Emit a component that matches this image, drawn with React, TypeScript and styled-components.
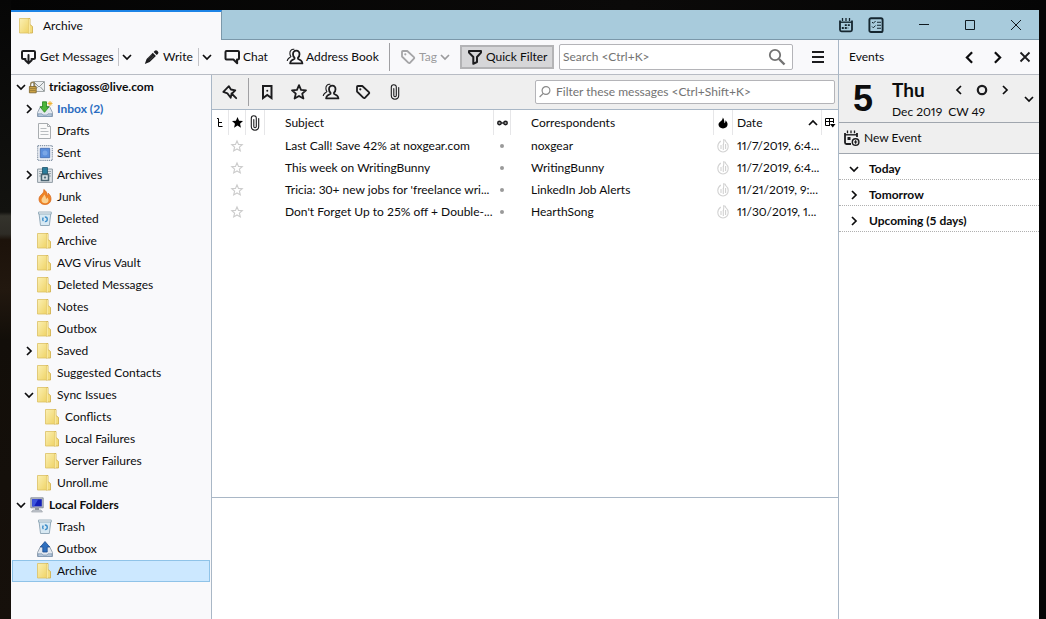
import React from "react";
import styled, { createGlobalStyle, css } from "styled-components";

const Global = createGlobalStyle`
  * { box-sizing: border-box; }
  body { margin: 0; background: #070605; }
  body, button, input, table {
    font-family: Lato, "Open Sans", sans-serif;
    font-size: 12px;
    line-height: 16px;
    color: #0c0c0d;
  }
`;

const line = "#a9b7c6";
const chrome = "#f9f9fb";
const grey = "#efefef";

/* ---------- icons ---------- */

const Svg = styled.svg`
  display: block;
  flex: none;
  overflow: visible;
`;

type IconProps = { size?: number; children: React.ReactNode; color?: string };
const Line = ({ size = 16, color = "#1c1c1e", children }: IconProps) => (
  <Svg width={size} height={size} viewBox="0 0 16 16" fill="none" stroke={color} strokeWidth="2" strokeLinejoin="round" strokeLinecap="round" aria-hidden="true">
    {children}
  </Svg>
);

const Chevron = ({ dir, size = 10 }: { dir: "down" | "right" | "left" | "up"; size?: number }) => {
  const d = {
    down: "M1 3l4 4 4-4",
    up: "M1 7l4-4 4 4",
    right: "M3 1l4 4-4 4",
    left: "M7 1L3 5l4 4",
  }[dir];
  return (
    <Svg width={size} height={size} viewBox="0 0 10 10" fill="none" stroke="currentColor" strokeWidth="1.700" aria-hidden="true">
      <path d={d} />
    </Svg>
  );
};

const GetIcon = () => (
  <Line>
    <path d="M4.500 10H2.200C1.400 10 1 9.600 1 9V3c0-.7.400-1 1.200-1h10.600c.8 0 1.200.3 1.200 1v6c0 .6-.4 1-1.200 1H10.500" />
    <path d="M7.500 6v8M4.300 11.200l3.200 3.200 3.200-3.200" />
  </Line>
);
const PencilIcon = () => (
  <Svg width={16} height={16} viewBox="0 0 16 16" fill="#1c1c1e" aria-hidden="true">
    <path d="M10.800 1.800a1.700 1.700 0 0 1 2.400 0l.7.7a1.700 1.700 0 0 1 0 2.400l-1.200 1.200-3.100-3.100zM8.800 3.800l3.100 3.100-6.200 6.200L.8 15l1.800-5z" />
    <path d="M8 5.500L3.800 9.700M9.500 7l-4.200 4.300" stroke="#777" strokeWidth=".5" />
  </Svg>
);
const ChatIcon = () => (
  <Line>
    <path d="M2.500 2h11.500c.7 0 1 .4 1 1v6.500c0 .7-.4 1-1 1H13l.2 3.800-3.800-3.800H2.500c-.7 0-1-.4-1-1V3c0-.6.300-1 1-1z" />
  </Line>
);
const PersonIcon = () => (
  <Svg width={16} height={16} viewBox="0 0 16 16" fill="none" stroke="#1c1c1e" strokeWidth="1.800" strokeLinejoin="round" aria-hidden="true">
    <path d="M9.300 1.700C7 1.700 6 3.300 6 5.200c0 1.500.6 2.700 1.500 3.500v1L4.600 11.500c-.9.600-1.300 1.400-1.500 2.900h12.300c-.2-1.500-.6-2.300-1.500-2.900L11 9.700v-1c.9-.8 1.500-2 1.500-3.500 0-1.900-.9-3.500-3.200-3.500z" />
    <path d="M7.300.4C4.300-.1 2.700 1.900 2.900 4.600c.1 1.300.4 2.200 1 3L1.500 9.500C.8 10.100.4 10.800.2 12" strokeWidth="1.100" />
  </Svg>
);
const TagIcon = ({ color }: { color?: string }) => (
  <Line color={color}>
    <path d="M2.800 2h4.500l6.600 6.200c.5.500.5 1 0 1.400l-4 4.200c-.5.500-1 .5-1.400 0L2 7.500V2.800c0-.5.300-.8.800-.8z" strokeWidth="1.800" />
    <circle cx="5.300" cy="5.300" r=".5" strokeWidth="1.200" />
  </Line>
);
const FunnelIcon = () => (
  <Line>
    <path d="M2 2h12v1.600L10 8v5L6.300 14.800V8L2 3.600z" />
  </Line>
);
const PinIcon = () => (
  <Line>
    <path d="M1.300 7.800L6.900 2.200l2 3.300 4.400.9-3.800 3.600-.8 3.800-3.300-4.400zM9.500 9.500l4.700 4.700" strokeWidth="1.800" />
  </Line>
);
const BookmarkIcon = () => (
  <Line>
    <path d="M4 2h8.500v12L8.250 11 4 14z" strokeLinejoin="miter" />
    <circle cx="8.250" cy="6.800" r="1" fill="#1c1c1e" stroke="none" />
  </Line>
);
const starPath = "M8 1.200l2 4.600 5 .5-3.800 3.300 1.200 4.900L8 11.900l-4.400 2.600 1.200-4.900L1 6.300l5-.5z";
const StarIcon = () => (
  <Line>
    <path d={starPath} strokeWidth="1.800" />
  </Line>
);
const ClipIcon = () => (
  <Svg width={16} height={16} viewBox="0 0 16 16" fill="none" stroke="#1c1c1e" strokeWidth="1.100" strokeLinecap="round" aria-hidden="true">
    <path d="M6.800 4.500v7c0 1.700 2.500 1.700 2.500 0V3.200c0-3.300-5-3.300-5 0v8.400c0 4.800 7.400 4.800 7.400 0V3.500" />
  </Svg>
);
const SearchIcon = () => (
  <Svg width={18} height={18} viewBox="0 0 18 18" fill="none" stroke="#737373" aria-hidden="true">
    <circle cx="7" cy="7" r="5.200" strokeWidth="1.800" />
    <path d="M11 11l5.500 5.500" strokeWidth="2.400" />
  </Svg>
);
const LensIcon = () => (
  <Svg width={12} height={12} viewBox="0 0 12 12" fill="none" stroke="#8a8a8a" strokeWidth="1.200" aria-hidden="true">
    <circle cx="7" cy="4.500" r="3.900" />
    <path d="M4.300 7.300L.6 11" />
  </Svg>
);
const MenuIcon = () => (
  <Svg width={12} height={12} viewBox="0 0 12 12" fill="#1c1c1e" aria-hidden="true">
    <path d="M0 0h12v2H0zM0 5h12v2H0zM0 10h12v2H0z" />
  </Svg>
);
const CalendarIcon = () => (
  <Svg width={16} height={16} viewBox="0 0 16 16" fill="none" stroke="#15262f" aria-hidden="true">
    <path d="M2 3.500v9.300c0 1 .5 1.500 1.500 1.500h9c1 0 1.500-.5 1.500-1.500V3.500" strokeWidth="1.800" />
    <path d="M2 5.200h12" strokeWidth="1.400" />
    <path d="M4.500 1v3M8 1v3M11.500 1v3" strokeWidth="1.300" />
    <path d="M6.800 8.200h5.400M3.800 11h6.400" strokeWidth="1.800" strokeDasharray="2 1" />
  </Svg>
);
const TasksIcon = () => (
  <Svg width={16} height={16} viewBox="0 0 16 16" fill="none" stroke="#15262f" aria-hidden="true">
    <rect x="1.400" y="1.200" width="13.200" height="13.800" rx="1.600" strokeWidth="1.900" />
    <path d="M9 5.200h4M9 8.200h4M9 11.200h4" strokeWidth="1.100" />
    <path d="M4 5l1.300 1.300L7.600 4M4 9.500l1.300 1.300 2.300-2.300" strokeWidth="1" />
  </Svg>
);
const NewEventIcon = () => (
  <Svg width={16} height={16} viewBox="0 0 16 16" fill="none" stroke="#1c1c1e" aria-hidden="true">
    <path d="M13 7V3M1 3v9.500c0 1 .5 1.500 1.500 1.500H7" strokeWidth="1.800" />
    <path d="M1 4.800h12" strokeWidth="1.400" />
    <path d="M3.500.5v2.700M7 .5v2.700M10.500.5v2.700" strokeWidth="1.300" />
    <path d="M3.500 8.500h3" strokeWidth="3" />
    <circle cx="11.600" cy="12" r="3.300" strokeWidth="1.400" />
    <path d="M9.900 12h3.400M11.600 10.300v3.400" strokeWidth="1.200" />
  </Svg>
);
const FlameIcon = ({ faint }: { faint?: boolean }) => (
  <Svg width={faint ? 12 : 10} height={faint ? 14 : 12} viewBox="0 0 12 14" aria-hidden="true">
    {faint ? (
      <g fill="none" stroke="#d2d2d2" strokeWidth="1.100">
        <path d="M3.800 2C1.600 3.700.8 5.500.8 7.600.8 10.600 3 13 6 13s5.200-2.400 5.200-5.400c0-2-.6-3.600-2.400-5C8.700 1.500 7.600.8 6.600.8c.6 2.300-.2 3-.2 5.200" />
        <path d="M6.300 5v6M8.600 5v5M4 6v4" />
      </g>
    ) : (
      <path d="M6 13.500c3.200 0 5.500-2 5.500-4.900 0-1.900-.9-3.400-2.600-4.900.2 1.600-.2 2.900-1.200 3.500C7.600 4.300 7.300 2 5.800.3 5.700 2.500 4.600 3.800 2.900 5.200 1.400 6.400.6 7.300.6 8.900c0 2.700 2.200 4.600 5.400 4.600z" fill="#000" />
    )}
  </Svg>
);
const ThreadIcon = () => (
  <Svg width={6} height={9} viewBox="0 0 6 9" fill="none" stroke="#000" aria-hidden="true">
    <path d="M0 .5h1.500V8.500H5.500M1.500 4.500h3.500" />
  </Svg>
);
const GlassesIcon = () => (
  <Svg width={11} height={6} viewBox="0 0 12 6" fill="#999" stroke="#1c1c1e" strokeWidth="1.500" aria-hidden="true">
    <circle cx="2.700" cy="3" r="1.900" />
    <circle cx="9.300" cy="3" r="1.900" />
    <path d="M4.500 3h3" />
  </Svg>
);
const PickerIcon = () => (
  <Svg width={11} height={10} viewBox="0 0 11 10" fill="none" stroke="#000" aria-hidden="true">
    <path d="M8.500 5V.5h-8v7H5M.5 3.500h8M4.500.5v7" />
    <path d="M5 6h5.500L7.750 9.500z" fill="#000" stroke="none" />
  </Svg>
);

const FolderIcon = () => (
  <Svg width={16} height={16} viewBox="0 0 16 16" aria-hidden="true">
    <defs>
      <linearGradient id="folder" x1="0" y1="0" x2="1" y2="1">
        <stop offset="0" stopColor="#fbf0b4" />
        <stop offset="1" stopColor="#efd365" />
      </linearGradient>
    </defs>
    <path d="M9 .5h2v6l2.500 2v6.500H9z" fill="#f3dc7c" stroke="#cfac45" strokeWidth=".8" />
    <path d="M.5.5h9.300V15H.5z" fill="url(#folder)" stroke="#dcc063" strokeWidth=".8" />
    <path d="M10.300 1v14" stroke="#fff3b8" strokeWidth=".8" />
  </Svg>
);
const AccountIcon = () => (
  <Svg width={16} height={16} viewBox="0 0 16 16" aria-hidden="true">
    <path d="M4.500 2.500h11v10h-11z" fill="#eceff0" stroke="#a3a9aa" />
    <path d="M5 3l5 5 5-5M5 12l3.500-4M15 12l-3.500-4" fill="none" stroke="#8d9496" />
    <path d="M1.600 8V5.500c0-3 4-3 4 0V8" fill="none" stroke="#95855a" strokeWidth="1.300" />
    <path d="M.4 7.500h6.800v6.300H.4z" fill="#cba245" stroke="#7a6229" strokeWidth=".8" />
    <path d="M1 9.500h5.600M1 11.500h5.600" stroke="#8f7434" strokeWidth=".7" />
  </Svg>
);
const Tray = () => (
  <g>
    <path d="M3.500 5.500h9l3 6v4H.5v-4z" fill="#e3e8ef" stroke="#8f9dab" strokeWidth=".9" />
    <path d="M1 12.800h4l1 1.200h4l1-1.200h4v2.700H1z" fill="#b5c6d8" stroke="#6e8cab" strokeWidth=".6" />
  </g>
);
const InboxIcon = () => (
  <Svg width={16} height={16} viewBox="0 0 16 16" aria-hidden="true">
    <Tray />
    <path d="M5.500.8h4v5H12L7.500 11.300 3 5.800h2.500z" fill="#4cb53a" stroke="#23851b" strokeWidth=".8" />
    <path d="M13 0v5M10.500 2.500h5M11.300.8l3.500 3.500M14.800.8l-3.500 3.500" stroke="#eeb02b" strokeWidth=".9" />
  </Svg>
);
const OutboxIcon = () => (
  <Svg width={16} height={16} viewBox="0 0 16 16" aria-hidden="true">
    <Tray />
    <path d="M5.800 11V6H3.300L8 .5 12.700 6h-2.500v5z" fill="#2f6fbe" stroke="#1c4c90" strokeWidth=".8" />
  </Svg>
);
const DraftIcon = () => (
  <Svg width={16} height={16} viewBox="0 0 16 16" aria-hidden="true">
    <path d="M1.500.5h9l3 3v12h-12z" fill="#fafafa" stroke="#a9adb0" />
    <path d="M10.500.5v3h3" fill="none" stroke="#a9adb0" />
    <path d="M3.500 5.500h6M3.500 8.500h8M3.500 11.500h8" stroke="#b9bdc0" />
  </Svg>
);
const SentIcon = () => (
  <Svg width={16} height={16} viewBox="0 0 16 16" aria-hidden="true">
    <path d="M.7.7h14.600v14.600H.7z" fill="#f4f6f9" stroke="#8796a8" strokeWidth="1.200" strokeDasharray="1.300 .8" />
    <path d="M3.300 3.300h9.400v9.400H3.300z" fill="#5c8fdc" stroke="#4a74b8" />
    <circle cx="8" cy="8" r="2.500" fill="#7ba7e6" />
  </Svg>
);
const ArchivesIcon = () => (
  <Svg width={16} height={16} viewBox="0 0 16 16" aria-hidden="true">
    <path d="M.6 2h14.800v13.400H.6z" fill="#e0e5e9" stroke="#84919a" strokeWidth=".9" />
    <path d="M2 4.500h12M2 6.500h12M2 9h2M12 9h2" stroke="#98a5ad" />
    <path d="M5.500.5h5V7h-5z" fill="#2b7d9c" stroke="#1d536a" strokeWidth=".8" />
    <path d="M4.500 7.500h7v6h-7z" fill="#e6edf0" stroke="#4a6472" strokeWidth="1.600" />
    <path d="M6.800 9.500h2.400v2H6.800z" fill="#56727f" />
  </Svg>
);
const JunkIcon = () => (
  <Svg width={16} height={16} viewBox="0 0 16 16" aria-hidden="true">
    <path d="M8 15.500c3.700 0 6-2.400 6-5.600 0-2.300-1-4.200-2.800-5.700.1 1.400-.2 2.200-.9 2.700C10.300 4 9 1.800 6.800.5 7.200 3 5.900 4 4.200 5.800 2.800 7.200 2 8.400 2 10.200c0 3.200 2.500 5.300 6 5.300z" fill="#ef8427" stroke="#d4661a" strokeWidth=".7" />
    <path d="M8.300 14.300c2 0 3.200-1.300 3.200-3 0-1.200-.5-2-1.300-2.800-.3 1-.7 1.400-1.200 1.500C9 8 8.300 6.500 7 5.500c.2 2-2.500 3-2.500 5.800 0 1.900 1.600 3 3.800 3z" fill="#fbd190" />
  </Svg>
);
const TrashIcon = () => (
  <Svg width={16} height={16} viewBox="0 0 16 16" aria-hidden="true">
    <path d="M2 2.500h11.800L12.300 14.500h-8.800z" fill="#d8e9f3" stroke="#8aa3b3" strokeWidth=".9" />
    <path d="M1.500 1h12.800v2H1.500z" fill="#edf4f8" stroke="#8aa3b3" strokeWidth=".8" />
    <circle cx="8" cy="8.300" r="2.300" fill="none" stroke="#3f8fca" strokeWidth="1.400" strokeDasharray="3.400 1.400" />
  </Svg>
);
const ComputerIcon = () => (
  <Svg width={16} height={16} viewBox="0 0 16 16" aria-hidden="true">
    <path d="M1.800.8h12.400v10H1.800z" fill="#b9bfc9" stroke="#7b828e" strokeWidth=".8" />
    <path d="M3.200 2.200h9.600v7.200H3.200z" fill="#1420b8" />
    <path d="M3.200 2.200h6L5 9.400H3.200z" fill="#3c55dd" />
    <path d="M6 11h4v2H6z" fill="#8f959e" />
    <path d="M4 13h8l1.500 2h-11z" fill="#c9cdd3" stroke="#8f959e" strokeWidth=".6" />
  </Svg>
);

/* ---------- frame ---------- */

const Desktop = styled.div`
  display: flex;
  min-height: 100vh;
  padding: 10px 7px 0 11px;
  background:
    linear-gradient(180deg, #060606 0, #12120f 212px, #34332c 216px, #2e2c26 234px, #1c120a 240px, #22180f 290px, #120e09 340px, #16100b 100%) 0 0 / 11px 100% no-repeat,
    linear-gradient(90deg, #040404 0, #0b0a09 60%, #050505 100%);
`;
const Window = styled.div`
  flex: 1;
  min-width: 0;
  display: flex;
  flex-direction: column;
  background: #fff;
`;
const TitleBar = styled.header`
  display: flex;
  height: 30px;
  background: #a8cbdc;
`;
const Tab = styled.div`
  width: 211px;
  display: flex;
  align-items: center;
  gap: 8px;
  padding: 0 8px;
  border-top: 2px solid #1d84e6;
  border-right: 1px solid #7b98aa;
  background: ${chrome};
`;
const TitleRest = styled.div`
  flex: 1;
  display: flex;
  justify-content: flex-end;
  border-bottom: 1px solid #7b98aa;
`;
const Shortcuts = styled.div`
  display: flex;
  margin-right: 10px;
`;
const PlainButton = styled.button`
  display: flex;
  align-items: center;
  justify-content: center;
  padding: 0;
  border: 0;
  background: none;
`;
const TitleButton = styled(PlainButton)<{ $small?: boolean }>`
  width: ${(p) => (p.$small ? 30 : 46)}px;
`;
const Columns = styled.div`
  flex: 1;
  display: flex;
`;
const Main = styled.main`
  flex: 1;
  min-width: 0;
  display: flex;
  flex-direction: column;
`;
const Panes = styled.div`
  flex: 1;
  display: flex;
`;

/* ---------- toolbar ---------- */

const Toolbar = styled.div`
  display: flex;
  align-items: center;
  height: 35px;
  padding: 0 14px 0 10px;
  background: ${chrome};
  border-bottom: 1px solid #b8bcc4;
`;
const ToolButton = styled.button<{ $disabled?: boolean; $pressed?: boolean; $width?: number }>`
  display: flex;
  align-items: center;
  gap: 3px;
  height: 24px;
  width: ${(p) => (p.$width ? p.$width + "px" : "auto")};
  flex: none;
  padding: 0;
  border: 0;
  background: none;
  white-space: nowrap;
  ${(p) => p.$disabled && css`color: #9b9b9d;`}
  ${(p) => p.$pressed && css`
    padding: 0 5px;
    background: #d6d6d8;
    border: 2px solid #b3b3b5;
  `}
`;
const MoreButton = styled(PlainButton)`
  width: 17px;
  height: 18px;
  margin-right: 9px;
  border-left: 1px solid #c4c4c8;
`;
const Divider = styled.span<{ $gap: number }>`
  width: 1px;
  height: 28px;
  margin: 0 ${(p) => p.$gap}px;
  background: #a0a0a3;
`;
const Field = styled.label`
  display: flex;
  align-items: center;
  gap: 5px;
  border: 1px solid #b4b4b8;
  border-radius: 2px;
  background: #fff;
  input {
    flex: 1;
    min-width: 0;
    padding: 0;
    border: 0;
    outline: 0;
    background: none;
  }
  input::placeholder { color: #737373; opacity: 1; }
`;
const SearchField = styled(Field)`
  flex: 1;
  height: 26px;
  margin: 0 19px 0 5px;
  padding: 0 6px 0 3px;
`;

/* ---------- folder tree ---------- */

const FolderPane = styled.nav`
  width: 201px;
  flex: none;
  padding: 1px 1px 0;
  background: ${chrome};
  border-right: 1px solid ${line};
`;
const FolderRow = styled.a<{ $level: number; $bold?: boolean; $unread?: boolean; $selected?: boolean }>`
  display: flex;
  align-items: center;
  height: 22px;
  padding-left: ${(p) => 3 + p.$level * 8}px;
  gap: 4px;
  border: 1px solid transparent;
  color: inherit;
  text-decoration: none;
  white-space: nowrap;
  ${(p) => p.$bold && css`font-weight: 700;`}
  ${(p) => p.$unread && css`font-weight: 700;`}
  ${(p) => p.$selected && css`background: #cce8ff; border-color: #8fc3e8;`}
`;
const FolderName = styled.span<{ $unread?: boolean }>`
  color: ${(p) => (p.$unread ? "#2a6cc0" : "inherit")};
`;
const Twisty = styled.span`
  width: 9px;
  flex: none;
`;

type Folder = {
  name: string;
  level: number;
  icon: React.ReactNode;
  open?: boolean;
  bold?: boolean;
  unread?: boolean;
  selected?: boolean;
};
const plain = <FolderIcon />;
const folders: Folder[] = [
  { name: "triciagoss@live.com", level: 0, icon: <AccountIcon />, open: true, bold: true },
  { name: "Inbox (2)", level: 1, icon: <InboxIcon />, open: false, unread: true },
  { name: "Drafts", level: 1, icon: <DraftIcon /> },
  { name: "Sent", level: 1, icon: <SentIcon /> },
  { name: "Archives", level: 1, icon: <ArchivesIcon />, open: false },
  { name: "Junk", level: 1, icon: <JunkIcon /> },
  { name: "Deleted", level: 1, icon: <TrashIcon /> },
  { name: "Archive", level: 1, icon: plain },
  { name: "AVG Virus Vault", level: 1, icon: plain },
  { name: "Deleted Messages", level: 1, icon: plain },
  { name: "Notes", level: 1, icon: plain },
  { name: "Outbox", level: 1, icon: plain },
  { name: "Saved", level: 1, icon: plain, open: false },
  { name: "Suggested Contacts", level: 1, icon: plain },
  { name: "Sync Issues", level: 1, icon: plain, open: true },
  { name: "Conflicts", level: 2, icon: plain },
  { name: "Local Failures", level: 2, icon: plain },
  { name: "Server Failures", level: 2, icon: plain },
  { name: "Unroll.me", level: 1, icon: plain },
  { name: "Local Folders", level: 0, icon: <ComputerIcon />, open: true, bold: true },
  { name: "Trash", level: 1, icon: <TrashIcon /> },
  { name: "Outbox", level: 1, icon: <OutboxIcon /> },
  { name: "Archive", level: 1, icon: plain, selected: true },
];

/* ---------- messages ---------- */

const MessagePane = styled.section`
  flex: 1;
  min-width: 0;
  display: flex;
  flex-direction: column;
`;
const FilterBar = styled.div`
  display: flex;
  align-items: center;
  height: 35px;
  padding: 0 3px 0 10px;
  background: ${grey};
  border-bottom: 1px solid ${line};
`;
const FilterButtons = styled.div`
  display: flex;
  gap: 16px;
`;
const FilterField = styled(Field)`
  width: 300px;
  height: 24px;
  margin-left: auto;
  padding: 0 3px;
`;
const ListArea = styled.div`
  flex: 1;
`;
const Preview = styled.div`
  height: 122px;
  border-top: 1px solid ${line};
`;
const Table = styled.table`
  width: 100%;
  table-layout: fixed;
  border-collapse: separate;
  border-spacing: 0;
`;
const Th = styled.th<{ $text?: boolean; $indent?: boolean }>`
  height: 25px;
  padding: 0 ${(p) => (p.$text ? 3 : 0)}px 0 ${(p) => (p.$indent ? 20 : p.$text ? 4 : 0)}px;
  border-right: 1px solid #e6e6e8;
  font-weight: 400;
  text-align: left;
  &:last-child { border-right: 0; }
`;
const Td = styled.td<{ $indent?: boolean; $text?: boolean }>`
  height: 22px;
  padding: 0 0 0 ${(p) => (p.$indent ? 20 : p.$text ? 4 : 0)}px;
  white-space: nowrap;
`;
const DateTd = styled(Td)`
  font-variant-numeric: proportional-nums;
`;
const Center = styled.div<{ $ruled?: boolean }>`
  display: flex;
  align-items: center;
  justify-content: center;
  padding-right: ${(p) => (p.$ruled ? 1 : 0)}px;
`;
const SortHead = styled.div`
  display: flex;
  align-items: center;
  justify-content: space-between;
`;
const Dot = styled.span`
  width: 4px;
  height: 4px;
  border-radius: 50%;
  background: #9a9a9a;
`;

const widths = [17, 17, 19, 0, 17, 203, 19, 89, 16];
const messages = [
  ["Last Call! Save 42% at noxgear.com", "noxgear", "11/7/2019, 6:4..."],
  ["This week on WritingBunny", "WritingBunny", "11/7/2019, 6:4..."],
  ["Tricia: 30+ new jobs for 'freelance wri...", "LinkedIn Job Alerts", "11/21/2019, 9:..."],
  ["Don't Forget Up to 25% off + Double-...", "HearthSong", "11/30/2019, 1..."],
];

/* ---------- events ---------- */

const Events = styled.aside`
  width: 201px;
  flex: none;
  border-left: 1px solid ${line};
`;
const EventsHead = styled.div`
  display: flex;
  align-items: center;
  height: 35px;
  padding: 0 5px 0 10px;
  background: ${chrome};
  border-bottom: 1px solid #b8bcc4;
`;
const HeadButtons = styled.div`
  display: flex;
  gap: 10px;
  margin-left: auto;
`;
const HeadButton = styled(PlainButton)`
  width: 18px;
  height: 20px;
`;
const DateBox = styled.div`
  display: flex;
  align-items: center;
  height: 48px;
  padding: 0 5px 0 14px;
  background: ${grey};
  border-bottom: 1px solid #a0a6ae;
`;
const DayNumber = styled.div`
  width: 39px;
  font: 700 36px/40px "Liberation Sans", sans-serif;
`;
const DateInfo = styled.div`
  flex: 1;
`;
const DateTop = styled.div`
  display: flex;
  align-items: center;
  height: 26px;
`;
const Weekday = styled.strong`
  flex: 1;
  font-size: 19px;
  line-height: 24px;
`;
const DayNav = styled.div`
  display: flex;
  align-items: center;
  gap: 12px;
  margin-right: 14px;
`;
const MonthLine = styled.div`
  display: flex;
  gap: 6px;
  line-height: 18px;
  font-variant-numeric: proportional-nums;
`;
const NewEvent = styled.button`
  display: flex;
  align-items: center;
  gap: 4px;
  width: 100%;
  height: 31px;
  padding: 0 5px;
  border: 0;
  border-bottom: 1px solid #a0a6ae;
  background: ${grey};
`;
const AgendaRow = styled.button`
  display: flex;
  align-items: center;
  gap: 10px;
  width: 100%;
  height: 26px;
  padding: 4px 0 0 10px;
  border: 0;
  border-bottom: 1px dotted #b0b0b0;
  background: none;
  font-weight: 700;
`;

export default function App() {
  return (
    <>
      <Global />
      <Desktop>
        <Window>
          <TitleBar>
            <Tab><FolderIcon />Archive</Tab>
            <TitleRest>
              <Shortcuts>
                <TitleButton $small aria-label="Calendar"><CalendarIcon /></TitleButton>
                <TitleButton $small aria-label="Tasks"><TasksIcon /></TitleButton>
              </Shortcuts>
              <TitleButton aria-label="Minimize">
                <Svg width={10} height={10} viewBox="0 0 10 10" stroke="#101a20"><path d="M0 4.500h10" /></Svg>
              </TitleButton>
              <TitleButton aria-label="Maximize">
                <Svg width={10} height={10} viewBox="0 0 10 10" stroke="#101a20" fill="none"><path d="M.5.5h9v9h-9z" /></Svg>
              </TitleButton>
              <TitleButton aria-label="Close">
                <Svg width={10} height={10} viewBox="0 0 10 10" stroke="#101a20"><path d="M0 0l10 10M10 0L0 10" /></Svg>
              </TitleButton>
            </TitleRest>
          </TitleBar>
          <Columns>
            <Main>
              <Toolbar>
                <ToolButton $width={97}><GetIcon />Get Messages</ToolButton>
                <MoreButton aria-label="Get messages options"><Chevron dir="down" /></MoreButton>
                <ToolButton $width={54}><PencilIcon />Write</ToolButton>
                <MoreButton aria-label="Write options"><Chevron dir="down" /></MoreButton>
                <ToolButton $width={63}><ChatIcon />Chat</ToolButton>
                <ToolButton $width={92}><PersonIcon />Address Book</ToolButton>
                <Divider $gap={10} />
                <ToolButton $disabled $width={60}><TagIcon color="#a5a5a7" />Tag<Chevron dir="down" /></ToolButton>
                <ToolButton $pressed $width={94} aria-pressed="true"><FunnelIcon />Quick Filter</ToolButton>
                <SearchField>
                  <input type="search" placeholder="Search <Ctrl+K>" aria-label="Search" />
                  <SearchIcon />
                </SearchField>
                <PlainButton aria-label="Menu"><MenuIcon /></PlainButton>
              </Toolbar>
              <Panes>
                <FolderPane>
                  {folders.map((f, i) => (
                    <FolderRow key={i} href="#" $level={f.level} $bold={f.bold} $unread={f.unread} $selected={f.selected}>
                      <Twisty>{f.open !== undefined && <Chevron dir={f.open ? "down" : "right"} />}</Twisty>
                      {f.icon}
                      <FolderName $unread={f.unread}>{f.name}</FolderName>
                    </FolderRow>
                  ))}
                </FolderPane>
                <MessagePane>
                  <FilterBar>
                    <PlainButton aria-label="Keep filters"><PinIcon /></PlainButton>
                    <Divider $gap={10} />
                    <FilterButtons>
                      <PlainButton aria-label="Unread"><BookmarkIcon /></PlainButton>
                      <PlainButton aria-label="Starred"><StarIcon /></PlainButton>
                      <PlainButton aria-label="Contact"><PersonIcon /></PlainButton>
                      <PlainButton aria-label="Tags"><TagIcon /></PlainButton>
                      <PlainButton aria-label="Attachment"><ClipIcon /></PlainButton>
                    </FilterButtons>
                    <FilterField>
                      <LensIcon />
                      <input type="search" placeholder="Filter these messages <Ctrl+Shift+K>" aria-label="Filter these messages" />
                    </FilterField>
                  </FilterBar>
                  <ListArea>
                    <Table>
                      <colgroup>
                        {widths.map((w, i) => <col key={i} width={w || undefined} />)}
                      </colgroup>
                      <thead>
                        <tr>
                          <Th aria-label="Thread"><Center><ThreadIcon /></Center></Th>
                          <Th aria-label="Starred"><Center>
                            <Svg width={11} height={11} viewBox="0 0 16 16"><path d="M8 0l2.300 5.400 5.700.5-4.300 3.800L13 15.500l-5-3-5 3 1.300-5.800L0 5.900l5.700-.5z" /></Svg>
                          </Center></Th>
                          <Th aria-label="Attachments"><Center><ClipIcon /></Center></Th>
                          <Th $text $indent>Subject</Th>
                          <Th aria-label="Read"><Center><GlassesIcon /></Center></Th>
                          <Th $text $indent>Correspondents</Th>
                          <Th aria-label="Junk"><Center><FlameIcon /></Center></Th>
                          <Th $text><SortHead>Date<Chevron dir="up" /></SortHead></Th>
                          <Th aria-label="Select columns"><Center><PickerIcon /></Center></Th>
                        </tr>
                      </thead>
                      <tbody>
                        {messages.map(([subject, who, date]) => (
                          <tr key={subject}>
                            <Td />
                            <Td><Center $ruled>
                              <Svg width={12} height={12} viewBox="0 0 16 16" fill="none" stroke="#cccccc" strokeWidth="1.500"><path d={starPath} /></Svg>
                            </Center></Td>
                            <Td />
                            <Td $text $indent>{subject}</Td>
                            <Td><Center $ruled><Dot /></Center></Td>
                            <Td $text $indent>{who}</Td>
                            <Td><Center $ruled><FlameIcon faint /></Center></Td>
                            <DateTd $text>{date}</DateTd>
                            <Td />
                          </tr>
                        ))}
                      </tbody>
                    </Table>
                  </ListArea>
                  <Preview />
                </MessagePane>
              </Panes>
            </Main>
            <Events>
              <EventsHead>
                Events
                <HeadButtons>
                  <HeadButton aria-label="Previous"><Chevron dir="left" size={13} /></HeadButton>
                  <HeadButton aria-label="Next"><Chevron dir="right" size={13} /></HeadButton>
                  <HeadButton aria-label="Close events">
                    <Svg width={10} height={10} viewBox="0 0 10 10" stroke="#1c1c1e" strokeWidth="1.800"><path d="M.5.5l9 9M9.500.5l-9 9" /></Svg>
                  </HeadButton>
                </HeadButtons>
              </EventsHead>
              <DateBox>
                <DayNumber>5</DayNumber>
                <DateInfo>
                  <DateTop>
                    <Weekday>Thu</Weekday>
                    <DayNav>
                      <PlainButton aria-label="Previous day"><Chevron dir="left" /></PlainButton>
                      <PlainButton aria-label="Today">
                        <Svg width={12} height={12} viewBox="0 0 12 12" fill="none" stroke="#1c1c1e" strokeWidth="2.200"><circle cx="6" cy="6" r="4.200" /></Svg>
                      </PlainButton>
                      <PlainButton aria-label="Next day"><Chevron dir="right" /></PlainButton>
                    </DayNav>
                  </DateTop>
                  <MonthLine><span>Dec 2019</span><span>CW 49</span></MonthLine>
                </DateInfo>
                <PlainButton aria-label="Show month"><Chevron dir="down" /></PlainButton>
              </DateBox>
              <NewEvent><NewEventIcon />New Event</NewEvent>
              {["Today", "Tomorrow", "Upcoming (5 days)"].map((t, i) => (
                <AgendaRow key={t}><Chevron dir={i === 0 ? "down" : "right"} />{t}</AgendaRow>
              ))}
            </Events>
          </Columns>
        </Window>
      </Desktop>
    </>
  );
}
